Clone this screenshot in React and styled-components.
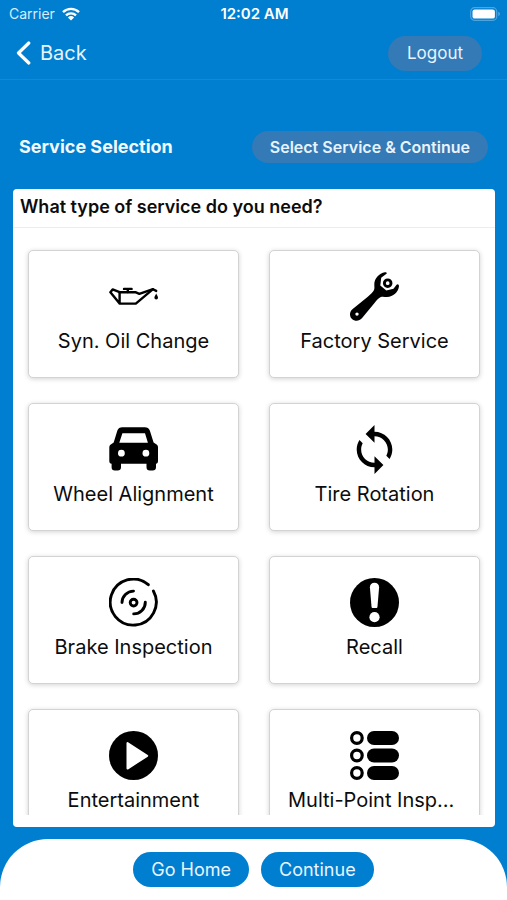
import React from 'react'
import styled, { createGlobalStyle } from 'styled-components'

const GlobalStyle = createGlobalStyle`
    *, *::before, *::after {
        box-sizing: border-box;
    }

    body {
        margin: 0;
        background-color: #007ecf;
        font-family: Inter, 'Liberation Sans', sans-serif;
        color: #0c0c0c;
    }

    button {
        border: none;
        font-family: inherit;
        cursor: pointer;
    }
`;

const Screen = styled.div`
    height: 100vh;
    display: flex;
    flex-direction: column;
    background-color: #007ecf;
`;

const StatusBar = styled.div`
    display: grid;
    grid-template-columns: 1fr auto 1fr;
    align-items: center;
    height: 27px;
    padding: 0 7px 0 9px;
    color: #ffffff;
    font-size: 14px;
    line-height: 20px;
`;

const Carrier = styled.span`
    display: flex;
    align-items: center;
    gap: 7px;
    color: #d9ecfb;
`;

const Clock = styled.span`
    font-size: 15px;
    font-weight: 600;
`;

const Battery = styled.svg`
    justify-self: end;
    width: 30px;
    height: 14px;
`;

const NavBar = styled.header`
    display: flex;
    align-items: center;
    justify-content: space-between;
    height: 53px;
    padding: 0 25px 0 16px;
    border-bottom: 1px solid #108ad6;
`;

const BackLink = styled.a`
    display: flex;
    align-items: center;
    gap: 9px;
    color: #e6f4ff;
    font-size: 20px;
    line-height: 24px;
    text-decoration: none;
`;

const Pill = styled.button`
    height: ${({ $size }) => ($size === 'large' ? '35px' : '32px')};
    padding: 0 ${({ $size }) => ($size === 'large' ? '19px' : '18px')};
    border-radius: 18px;
    background-color: #337ab7;
    color: #e8f3fc;
    font-size: ${({ $size }) => ($size === 'large' ? '17px' : '16px')};
    font-weight: ${({ $bold }) => ($bold ? 600 : 400)};
    white-space: nowrap;
`;

const TitleRow = styled.div`
    display: flex;
    align-items: center;
    justify-content: space-between;
    padding: 51px 19px 26px 19px;
`;

const Title = styled.h1`
    margin: 0;
    color: #f2faff;
    font-size: 18px;
    line-height: 24px;
    font-weight: 700;
`;

const Panel = styled.main`
    flex: 1;
    min-height: 0;
    display: flex;
    flex-direction: column;
    margin: 0 12px 12px 13px;
    padding-bottom: 12px;
    border-radius: 4px;
    background-color: #ffffff;
`;

const Question = styled.h2`
    margin: 0;
    padding: 6px 7px 8px 7px;
    border-bottom: 1px solid #ededed;
    font-size: 18px;
    line-height: 24px;
    font-weight: 600;
`;

const ServiceGrid = styled.div`
    flex: 1;
    min-height: 0;
    display: grid;
    grid-template-columns: repeat(2, minmax(0, 1fr));
    grid-auto-rows: 128px;
    column-gap: 30px;
    row-gap: 25px;
    padding: 22px 15px;
    overflow-y: auto;
    scrollbar-width: none;
`;

const ServiceCard = styled.button`
    display: flex;
    flex-direction: column;
    align-items: center;
    gap: 8px;
    padding: 21px 18px 0 18px;
    border: 1px solid #d3d3d3;
    border-radius: 5px;
    background-color: #ffffff;
    box-shadow: 0 1px 5px rgba(0, 0, 0, 0.18);
    color: #0c0c0c;
`;

const ServiceIcon = styled.svg`
    flex: none;
    width: 49px;
    height: 49px;
    fill: #000000;
`;

const ServiceName = styled.span`
    max-width: 100%;
    overflow: hidden;
    text-overflow: ellipsis;
    white-space: nowrap;
    font-size: 20px;
    line-height: 24px;
`;

const Footer = styled.footer`
    display: flex;
    justify-content: center;
    gap: 12px;
    padding: 13px 0;
    border-radius: 48px 48px 0 0;
    background-color: #ffffff;
`;

const FooterButton = styled.button`
    height: 35px;
    padding: 0 18px;
    border-radius: 18px;
    background-color: #007ecf;
    color: #e8f5ff;
    font-size: 18px;
`;

const OilIcon = () => (
    <ServiceIcon viewBox="0 0 49 49" aria-hidden="true">
        <g fill="none" stroke="#000" strokeWidth="2.4" strokeLinejoin="round" strokeLinecap="round">
            <path d="M10.6 20.2H26.4L30.3 21.8L44 17.2L47.2 18.9" />
            <path d="M44 17.2L26.8 31.6H10.6V20.2L3.6 17.4L1.4 20.2L10.6 31.6" />
            <path d="M15 16.9H22.6M18.8 17V20" />
        </g>
        <path d="M47.2 21.6C48 23.4 49 24.6 49 25.7A1.8 1.8 0 0 1 45.4 25.7C45.4 24.6 46.5 23.4 47.2 21.6Z" />
    </ServiceIcon>
)

const WrenchIcon = () => (
    <ServiceIcon viewBox="0 0 49 49" aria-hidden="true">
        <path
            fillRule="evenodd"
            d="M36.8 1.4C36.8.6 36 0 34.9.2C29.2 1.4 24.3 6.2 24.3 12.3C24.3 14.5 24.7 16.2 24 18C23.3 20 20.3 22.5 17.8 24.7L2.4 37.2C-.6 39.8-.8 44 1.8 46.7C4.7 49.6 9.2 49.4 11.9 46.3L24.5 31C26.6 28.4 28.7 25.9 30.8 25C32.8 24.3 34.7 25 37 25C43.3 24.8 48.2 20.2 49 14.3C49 12.4 47.5 11.7 46.4 13L43.5 16.8L36.3 18.6L30.3 13.6L31.2 5.8ZM7 40.4A1.7 1.7 0 1 0 7 43.8A1.7 1.7 0 1 0 7 40.4Z"
        />
        <circle cx="37.7" cy="11.2" r="3.3" fill="none" stroke="#000" strokeWidth="2.9" />
    </ServiceIcon>
)

const CarIcon = () => (
    <ServiceIcon viewBox="0 0 49 49" aria-hidden="true">
        <path
            fillRule="evenodd"
            d="M13.4 2.2H35.7C38.3 2.2 40.1 3.3 40.9 5.8L44.6 17.6L47.6 19.6C48.6 20.4 49 21.3 49 22.6V36C49 37.6 48.3 38.5 47 38.8V42.3C47 44.4 45.7 45.5 43.7 45.5H40.8C38.8 45.5 37.5 44.4 37.5 42.3V38.8H12V42.3C12 44.4 10.7 45.5 8.7 45.5H5.8C3.8 45.5 2.6 44.4 2.6 42.3V38.8C1 38.5.3 37.6.3 36V22.6C.3 21.3.8 20.4 1.8 19.6L4.7 17.6L8.3 5.8C9.1 3.3 10.8 2.2 13.4 2.2ZM13.4 8.2L10.3 17.8H38.9L36 8.2ZM12.4 24.8A3.4 3.4 0 1 0 12.4 31.6A3.4 3.4 0 1 0 12.4 24.8ZM36.9 24.8A3.4 3.4 0 1 0 36.9 31.6A3.4 3.4 0 1 0 36.9 24.8Z"
        />
    </ServiceIcon>
)

const RotationIcon = () => (
    <ServiceIcon viewBox="1 1 22 22" aria-hidden="true">
        <path d="M12 4V1L8 5l4 4V6c3.31 0 6 2.69 6 6 0 1.01-.25 1.97-.7 2.8l1.46 1.46C19.54 15.03 20 13.57 20 12c0-4.42-3.58-8-8-8zm0 14c-3.31 0-6-2.69-6-6 0-1.01.25-1.97.7-2.8L5.24 7.74C4.46 8.97 4 10.43 4 12c0 4.42 3.58 8 8 8v3l4-4-4-4v3z" />
    </ServiceIcon>
)

const BrakeIcon = () => (
    <ServiceIcon viewBox="0 0 49 49" aria-hidden="true">
        <g fill="none" stroke="#000" strokeWidth="2.9" strokeLinecap="round">
            <path d="M39.3 6.7A23 23 0 1 0 44.4 13" />
            <path d="M24.5 13.1A11.6 11.6 0 0 0 13 24.6" />
            <path d="M36.3 24.2A11.6 11.6 0 0 1 24.7 35.9" />
            <circle cx="24.6" cy="24.6" r="3.4" />
        </g>
    </ServiceIcon>
)

const RecallIcon = () => (
    <ServiceIcon viewBox="0 0 49 49" aria-hidden="true">
        <circle cx="24.5" cy="24.5" r="24.5" />
        <g fill="#fff">
            <path d="M19.9 9.2C19.9 6.4 21.8 4.8 24.5 4.8C27.2 4.8 29.1 6.4 29.1 9.2L27.5 28.6C27.4 29.6 26.9 30.1 26 30.1H23C22.1 30.1 21.6 29.6 21.5 28.6Z" />
            <circle cx="24.5" cy="39.2" r="5.1" />
        </g>
    </ServiceIcon>
)

const PlayIcon = () => (
    <ServiceIcon viewBox="0 0 49 49" aria-hidden="true">
        <circle cx="24.5" cy="24.5" r="24.5" />
        <path d="M18.5 12V37.6L38.2 24.8Z" fill="#fff" stroke="#fff" strokeWidth="2" strokeLinejoin="round" />
    </ServiceIcon>
)

const ChecklistIcon = () => (
    <ServiceIcon viewBox="0 0 49 49" aria-hidden="true">
        {[7, 24.5, 42].map((y) => (
            <g key={y}>
                <circle cx="6.9" cy={y} r="5.3" fill="none" stroke="#000" strokeWidth="3.2" />
                <rect x="17" y={y - 7} width="32" height="14" rx="7" />
            </g>
        ))}
    </ServiceIcon>
)

const services = [
    { name: 'Syn. Oil Change', Icon: OilIcon },
    { name: 'Factory Service', Icon: WrenchIcon },
    { name: 'Wheel Alignment', Icon: CarIcon },
    { name: 'Tire Rotation', Icon: RotationIcon },
    { name: 'Brake Inspection', Icon: BrakeIcon },
    { name: 'Recall', Icon: RecallIcon },
    { name: 'Entertainment', Icon: PlayIcon },
    { name: 'Multi-Point Inspection', Icon: ChecklistIcon },
]

const App = () => {

    return (
        <>
            <GlobalStyle />
            <Screen>
                <StatusBar>
                    <Carrier>
                        Carrier
                        <svg width="18" height="14" viewBox="0 0 18 14" aria-hidden="true">
                            <g fill="none" stroke="#fff" strokeWidth="2.4">
                                <path d="M1 5.2A11.4 11.4 0 0 1 17 5.2" />
                                <path d="M4 8.4A7.2 7.2 0 0 1 14 8.4" />
                            </g>
                            <path d="M9 13.6L5.9 10.4A4.5 4.5 0 0 1 12.1 10.4Z" fill="#fff" />
                        </svg>
                    </Carrier>
                    <Clock>12:02 AM</Clock>
                    <Battery viewBox="0 0 30 14" aria-hidden="true">
                        <rect x=".7" y=".7" width="26" height="12.6" rx="3.8" fill="none" stroke="#4da5e0" strokeWidth="1.2" />
                        <rect x="2.5" y="2.4" width="22.4" height="9.2" rx="2.2" fill="#fff" />
                        <path d="M28.2 4.8Q30 5.4 30 7T28.2 9.2Z" fill="#4da5e0" />
                    </Battery>
                </StatusBar>
                <NavBar>
                    <BackLink href="#back">
                        <svg width="15" height="24" viewBox="0 0 15 24" aria-hidden="true">
                            <path d="M12.8 2L2.5 12L12.8 22" fill="none" stroke="#fff" strokeWidth="3.2" strokeLinecap="round" strokeLinejoin="round" />
                        </svg>
                        Back
                    </BackLink>
                    <Pill type="button" $size="large">Logout</Pill>
                </NavBar>
                <TitleRow>
                    <Title>Service Selection</Title>
                    <Pill type="button" $bold>Select Service &amp; Continue</Pill>
                </TitleRow>
                <Panel>
                    <Question>What type of service do you need?</Question>
                    <ServiceGrid>
                        {services.map(({ name, Icon }) => (
                            <ServiceCard type="button" key={name}>
                                <Icon />
                                <ServiceName>{name}</ServiceName>
                            </ServiceCard>
                        ))}
                    </ServiceGrid>
                </Panel>
                <Footer>
                    <FooterButton type="button">Go Home</FooterButton>
                    <FooterButton type="button">Continue</FooterButton>
                </Footer>
            </Screen>
        </>
    )
}

export default App
